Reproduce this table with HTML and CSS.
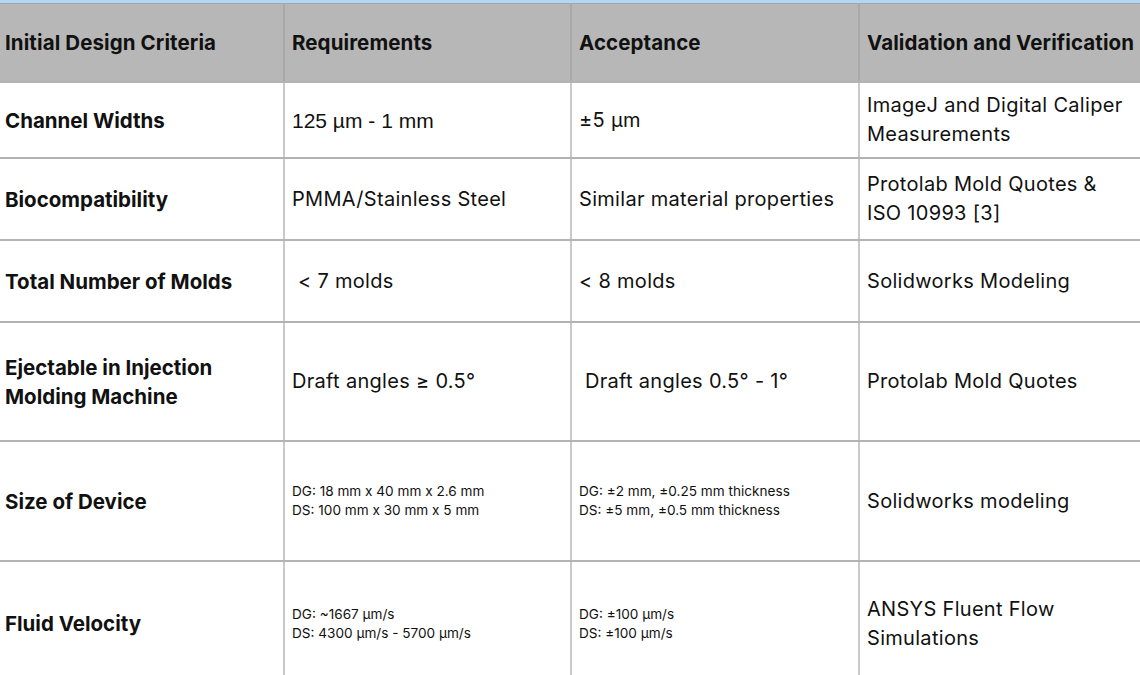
FILE: index.html
```html
<!DOCTYPE html>
<html>
<head>
<meta charset="utf-8">
<link rel="stylesheet" href="styles.css">
</head>
<body>
<div class="topbar"></div>
<table class="grid">
  <colgroup>
    <col class="c1"><col class="c2"><col class="c3"><col class="c4">
  </colgroup>
  <thead>
    <tr class="h-head">
      <th class="first">Initial Design Criteria</th>
      <th>Requirements</th>
      <th>Acceptance</th>
      <th>Validation and Verification</th>
    </tr>
  </thead>
  <tbody>
    <tr class="h76">
      <td class="first crit">Channel Widths</td>
      <td class="arial">125 µm - 1 mm</td>
      <td>±5 µm</td>
      <td class="last">ImageJ and Digital Caliper Measurements</td>
    </tr>
    <tr class="h82">
      <td class="first crit">Biocompatibility</td>
      <td>PMMA/Stainless Steel</td>
      <td>Similar material properties</td>
      <td class="last">Protolab Mold Quotes &amp; ISO 10993 [3]</td>
    </tr>
    <tr class="h82">
      <td class="first crit">Total Number of Molds</td>
      <td>&nbsp;&lt; 7 molds</td>
      <td>&lt; 8 molds</td>
      <td class="last">Solidworks Modeling</td>
    </tr>
    <tr class="h119">
      <td class="first crit">Ejectable in Injection Molding Machine</td>
      <td>Draft angles ≥ 0.5°</td>
      <td>&nbsp;Draft angles 0.5° - 1°</td>
      <td class="last">Protolab Mold Quotes</td>
    </tr>
    <tr class="h120">
      <td class="first crit">Size of Device</td>
      <td class="small">DG: 18 mm x 40 mm x 2.6 mm<br>DS: 100 mm x 30 mm x 5 mm</td>
      <td class="small">DG: ±2 mm, ±0.25 mm thickness<br>DS: ±5 mm, ±0.5 mm thickness</td>
      <td class="last">Solidworks modeling</td>
    </tr>
    <tr class="h125">
      <td class="first crit">Fluid Velocity</td>
      <td class="small">DG: ~1667 µm/s<br>DS: 4300 µm/s - 5700 µm/s</td>
      <td class="small">DG: ±100 µm/s<br>DS: ±100 µm/s</td>
      <td class="last">ANSYS Fluent Flow Simulations</td>
    </tr>
  </tbody>
</table>
</body>
</html>
```
FILE: styles.css
```css
html, body {
  margin: 0;
  padding: 0;
  background: #ffffff;
  overflow: hidden;
}
body {
  width: 1140px;
  height: 675px;
  font-family: Inter, "Open Sans", sans-serif;
  color: #111111;
}
.topbar {
  height: 3px;
  background: #b2d6f4;
}
.grid {
  border-collapse: collapse;
  table-layout: fixed;
  width: 1143px;
}
.c1 { width: 284px; }
.c2 { width: 287px; }
.c3 { width: 288px; }
.c4 { width: 284px; }
th, td {
  border: 2px solid #c9c9c9;
  border-top: none;
  border-bottom: 2px solid #b3b3b3;
  padding: 1px 6px 0 7px;
  vertical-align: middle;
  text-align: left;
  font-size: 20px;
  line-height: 29px;
  font-weight: 400;
  letter-spacing: 0.3px;
}
th {
  background: #b7b7b7;
  border-left-color: #a9a9a9;
  border-right-color: #a9a9a9;
  border-top: 1px solid #a5a5a5;
  font-weight: 700;
  font-size: 20.5px;
  letter-spacing: 0.1px;
  white-space: nowrap;
}
.first {
  border-left: none;
  padding-left: 5px;
}
.last {
  padding-right: 10px;
}
.crit {
  font-weight: 700;
  font-size: 20.5px;
  letter-spacing: 0;
}
.arial {
  font-family: "Liberation Sans", Arial, sans-serif;
  font-size: 21px;
  letter-spacing: 0;
}
.small {
  font-size: 13.6px;
  line-height: 19px;
  letter-spacing: 0;
}
.h-head { height: 78px; }
.h76 { height: 76px; }
.h82 { height: 82px; }
.h119 { height: 119px; }
.h120 { height: 120px; }
.h125 { height: 125px; }
```
